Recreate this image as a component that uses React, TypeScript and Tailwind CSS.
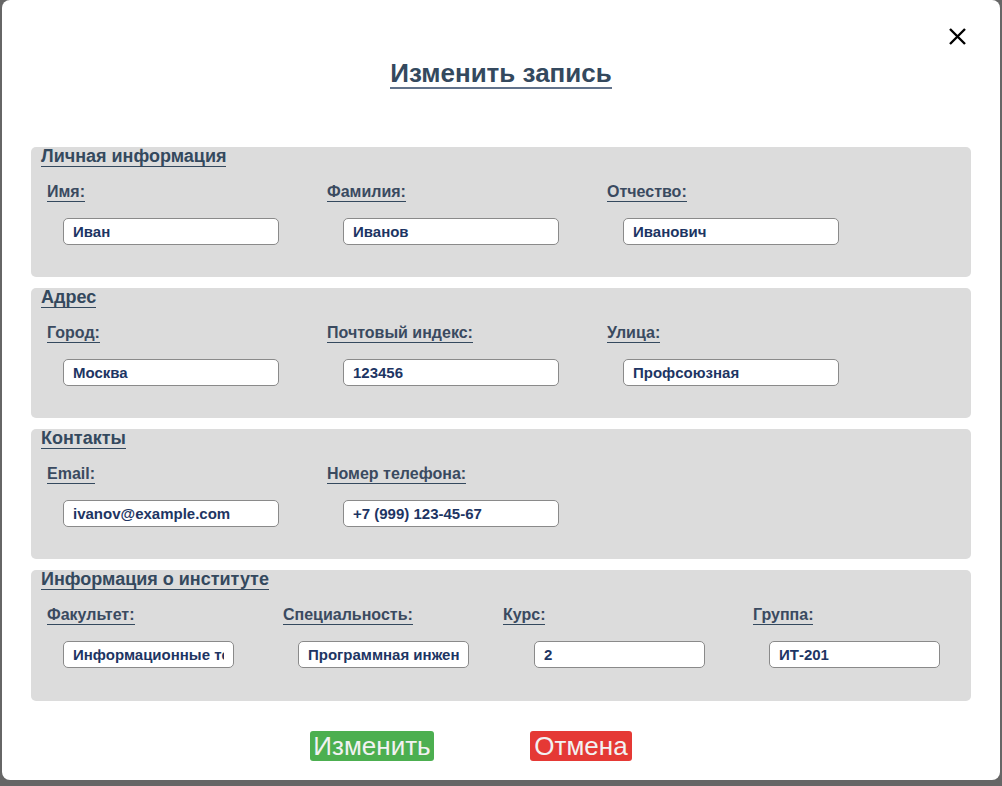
import React from "react";

type Field = { label: string; value: string };

const font = { fontFamily: '"Liberation Sans", Arial, sans-serif' };

function Section({
  title,
  fields,
  cols,
  offsets,
  inputW,
  h = "h-[130px]",
}: {
  title: string;
  fields: Field[];
  cols: string;
  offsets: string[];
  inputW: string;
  h?: string;
}) {
  return (
    <div className={`${h} rounded-[5px] bg-[#dcdcdc] pl-[10px]`}>
      <h3 className="block w-fit border-b border-[#34495e] text-[18px] font-bold leading-[19px] text-[#34495e]">
        {title}
      </h3>
      <div className={`mt-[16px] grid pl-[6px] ${cols}`}>
        {fields.map((f, i) => (
          <div key={f.label} className="flex flex-col items-start">
            <label className="border-b border-[#34495e] text-[16px] font-bold leading-[18px] text-[#3a4a60]">
              {f.label}
            </label>
            <input
              readOnly
              value={f.value}
              className={`mt-[16px] h-[27px] ${inputW} ${offsets[i]} rounded-[5px] border border-[#8a8a8a] bg-white px-[9px] text-[15px] font-bold text-[#1d3563] outline-none`}
              style={font}
            />
          </div>
        ))}
      </div>
    </div>
  );
}

export default function App() {
  return (
    <div className="min-h-[786px] bg-[#666666] pl-[2px]" style={font}>
      <div className="relative h-[780px] w-[998px] rounded-[8px] bg-white">
        <button className="absolute right-[33px] top-[27px] h-[19px] w-[19px] text-black" aria-label="close">
          <svg viewBox="0 0 19 19" className="h-[19px] w-[19px]">
            <path d="M2 2L17 17M17 2L2 17" stroke="currentColor" strokeWidth="2.4" strokeLinecap="butt" />
          </svg>
        </button>

        <div className="pt-[59px] text-center">
          <h2 className="inline-block border-b-2 border-[#61728b] text-[26px] font-bold leading-[28px] text-[#34495e]">
            Изменить запись
          </h2>
        </div>

        <div className="mx-[29px] mt-[58px] flex flex-col gap-[11px]">
          <Section
            title="Личная информация"
            cols="grid-cols-[280px_280px_280px]"
            offsets={["ml-4", "ml-4", "ml-4"]}
            inputW="w-[216px]"
            fields={[
              { label: "Имя:", value: "Иван" },
              { label: "Фамилия:", value: "Иванов" },
              { label: "Отчество:", value: "Иванович" },
            ]}
          />
          <Section
            title="Адрес"
            cols="grid-cols-[280px_280px_280px]"
            offsets={["ml-4", "ml-4", "ml-4"]}
            inputW="w-[216px]"
            fields={[
              { label: "Город:", value: "Москва" },
              { label: "Почтовый индекс:", value: "123456" },
              { label: "Улица:", value: "Профсоюзная" },
            ]}
          />
          <Section
            title="Контакты"
            cols="grid-cols-[280px_280px]"
            offsets={["ml-4", "ml-4"]}
            inputW="w-[216px]"
            fields={[
              { label: "Email:", value: "ivanov@example.com" },
              { label: "Номер телефона:", value: "+7 (999) 123-45-67" },
            ]}
          />
          <Section
            title="Информация о институте"
            h="h-[131px]"
            cols="grid-cols-[236px_220px_250px_1fr]"
            offsets={["ml-4", "ml-[15px]", "ml-[31px]", "ml-4"]}
            inputW="w-[171px]"
            fields={[
              { label: "Факультет:", value: "Информационные технологии" },
              { label: "Специальность:", value: "Программная инженерия" },
              { label: "Курс:", value: "2" },
              { label: "Группа:", value: "ИТ-201" },
            ]}
          />
        </div>

        <div className="mt-[30px] flex gap-[96px] pl-[308px]">
          <button className="h-[30px] w-[124px] rounded-[3px] bg-[#4caf50] text-[26px] leading-[30px] text-[#f2f2f2]">
            Изменить
          </button>
          <button className="h-[30px] w-[102px] rounded-[3px] bg-[#e53935] text-[26px] leading-[30px] text-[#f2f2f2]">
            Отмена
          </button>
        </div>
      </div>
    </div>
  );
}
